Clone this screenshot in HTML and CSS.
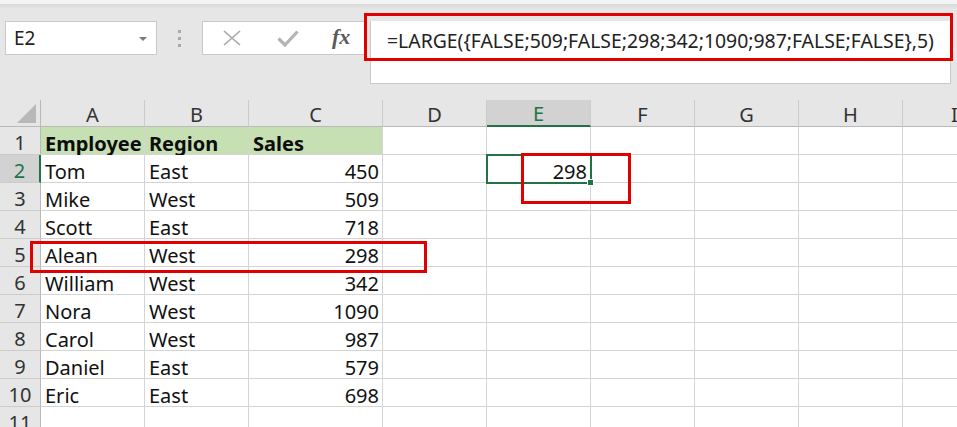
FILE: index.html
```html
<!DOCTYPE html>
<html>
<head>
<meta charset="utf-8">
<link rel="stylesheet" href="styles.css">
</head>
<body>
<div class="app">
  <div class="topstrip"></div>
  <div class="toolbar">
    <div class="namebox">
      <span class="name">E2</span>
      <svg class="caret" width="8" height="5" viewBox="0 0 8 5"><path d="M0 0H8L4 4Z" fill="#7a7a7a"/></svg>
    </div>
    <div class="grip"><i></i><i></i><i></i></div>
    <div class="buttons">
      <svg class="icon-x" width="18" height="16" viewBox="0 0 18 16"><path d="M1 1L17 15M17 1L1 15" stroke="#a6a6a6" stroke-width="1.6" fill="none"/></svg>
      <svg class="icon-check" width="22" height="17" viewBox="0 0 22 17"><path d="M1.5 8.5L8 15L20.5 1.5" stroke="#b4b4b4" stroke-width="3.2" fill="none"/></svg>
      <span class="fx">fx</span>
    </div>
    <div class="formula">=LARGE({FALSE;509;FALSE;298;342;1090;987;FALSE;FALSE},5)</div>
  </div>
  <div class="sheet">
    <div class="hd corner"><span class="tri"></span></div>
    <div class="hd col">A</div>
    <div class="hd col">B</div>
    <div class="hd col">C</div>
    <div class="hd col">D</div>
    <div class="hd col active-col">E</div>
    <div class="hd col">F</div>
    <div class="hd col">G</div>
    <div class="hd col">H</div>
    <div class="hd col">I</div>

    <div class="hd row">1</div>
    <div class="c head">Employee</div><div class="c head">Region</div><div class="c head">Sales</div>
    <div class="c"></div><div class="c"></div><div class="c"></div><div class="c"></div><div class="c"></div><div class="c"></div>

    <div class="hd row active-row">2</div>
    <div class="c">Tom</div><div class="c">East</div><div class="c num">450</div>
    <div class="c"></div><div class="c num selected">298<span class="handle"></span></div><div class="c"></div><div class="c"></div><div class="c"></div><div class="c"></div>

    <div class="hd row">3</div>
    <div class="c">Mike</div><div class="c">West</div><div class="c num">509</div>
    <div class="c"></div><div class="c"></div><div class="c"></div><div class="c"></div><div class="c"></div><div class="c"></div>

    <div class="hd row">4</div>
    <div class="c">Scott</div><div class="c">East</div><div class="c num">718</div>
    <div class="c"></div><div class="c"></div><div class="c"></div><div class="c"></div><div class="c"></div><div class="c"></div>

    <div class="hd row">5</div>
    <div class="c">Alean</div><div class="c">West</div><div class="c num">298</div>
    <div class="c"></div><div class="c"></div><div class="c"></div><div class="c"></div><div class="c"></div><div class="c"></div>

    <div class="hd row">6</div>
    <div class="c">William</div><div class="c">West</div><div class="c num">342</div>
    <div class="c"></div><div class="c"></div><div class="c"></div><div class="c"></div><div class="c"></div><div class="c"></div>

    <div class="hd row">7</div>
    <div class="c">Nora</div><div class="c">West</div><div class="c num">1090</div>
    <div class="c"></div><div class="c"></div><div class="c"></div><div class="c"></div><div class="c"></div><div class="c"></div>

    <div class="hd row">8</div>
    <div class="c">Carol</div><div class="c">West</div><div class="c num">987</div>
    <div class="c"></div><div class="c"></div><div class="c"></div><div class="c"></div><div class="c"></div><div class="c"></div>

    <div class="hd row">9</div>
    <div class="c">Daniel</div><div class="c">East</div><div class="c num">579</div>
    <div class="c"></div><div class="c"></div><div class="c"></div><div class="c"></div><div class="c"></div><div class="c"></div>

    <div class="hd row">10</div>
    <div class="c">Eric</div><div class="c">East</div><div class="c num">698</div>
    <div class="c"></div><div class="c"></div><div class="c"></div><div class="c"></div><div class="c"></div><div class="c"></div>

    <div class="hd row">11</div>
    <div class="c"></div><div class="c"></div><div class="c"></div>
    <div class="c"></div><div class="c"></div><div class="c"></div><div class="c"></div><div class="c"></div><div class="c"></div>
  </div>

  <div class="mark mark-formula"></div>
  <div class="mark mark-row"></div>
  <div class="mark mark-cell"></div>
</div>
</body>
</html>
```

FILE: styles.css
```css
* { box-sizing: border-box; }
html, body { margin: 0; padding: 0; }
body {
  width: 957px;
  height: 427px;
  overflow: hidden;
  background: #e6e6e6;
  font-family: "Noto Sans", "Liberation Sans", sans-serif;
  color: #1a1a1a;
}
.app { position: relative; width: 957px; height: 427px; overflow: hidden; }

.topstrip {
  height: 9px;
  background: linear-gradient(#f4f4f4 0, #f4f4f4 4px, #d9d9d9 4px, #e6e6e6 9px);
}

.toolbar {
  display: flex;
  align-items: flex-start;
  height: 91px;
  padding-top: 12px;
}
.namebox {
  margin-left: 5px;
  width: 152px;
  height: 34px;
  background: #fff;
  border: 1px solid #c9c9c9;
  display: flex;
  align-items: center;
  justify-content: space-between;
  padding: 0 9px 0 8px;
}
.name { font-size: 19px; color: #222; }
.caret { margin-top: 2px; }
.grip {
  width: 45px;
  height: 34px;
  display: flex;
  flex-direction: column;
  align-items: center;
  justify-content: center;
  gap: 4px;
}
.grip i { display: block; width: 3px; height: 3px; background: #a9a9a9; }
.buttons {
  width: 163px;
  height: 34px;
  background: #fff;
  border: 1px solid #c9c9c9;
  border-right: none;
  display: flex;
  align-items: center;
  padding-left: 20px;
}
.icon-x { margin-right: 36px; }
.icon-check { margin-right: 33px; }
.fx {
  font-family: "Liberation Serif", "DejaVu Serif", serif;
  font-style: italic;
  font-weight: bold;
  font-size: 22px;
  color: #5a5a5a;
  margin-top: -2px;
}
.formula {
  margin-left: 5px;
  width: 581px;
  height: 63px;
  background: #fff;
  border: 1px solid #c9c9c9;
  border-top: none;
  padding: 6px 0 0 16px;
  font-size: 19.4px;
  color: #222;
  white-space: nowrap;
}

.sheet {
  display: grid;
  grid-template-columns: 41px 104px 104px 134px 104px 104px 104px 104px 104px 104px;
  grid-template-rows: 27px repeat(11, 28px);
}
.hd {
  background: #e6e6e6;
  color: #333;
  font-size: 20px;
  display: flex;
  align-items: center;
  justify-content: center;
}
.col {
  border-right: 1px solid #cbcbcb;
  border-bottom: 1px solid #b9b9b9;
  padding-top: 2px;
}
.corner {
  position: relative;
  border-right: 1px solid #b9b9b9;
  border-bottom: 1px solid #b9b9b9;
}
.tri {
  position: absolute;
  right: 4px;
  bottom: 3px;
  width: 0; height: 0;
  border-left: 19px solid transparent;
  border-bottom: 19px solid #b8b8b8;
}
.row {
  border-right: 1px solid #b9b9b9;
  border-bottom: 1px solid #cbcbcb;
  padding-top: 4px;
}
.active-col {
  background: #d2d2d2;
  color: #217346;
  border-bottom: 2px solid #217346;
}
.active-row {
  background: #d2d2d2;
  color: #217346;
  border-right: 2px solid #217346;
}
.c {
  background: #fff;
  border-right: 1px solid #d4d4d4;
  border-bottom: 1px solid #d4d4d4;
  font-size: 20px;
  line-height: 27px;
  padding: 3px 3px 0 4px;
  white-space: nowrap;
  overflow: visible;
  color: #111;
}
.head { background: #c6e0b4; font-weight: bold; color: #0d0d0d; }
.num { text-align: right; }
.selected {
  position: relative;
  outline: 2px solid #217346;
  outline-offset: -1px;
  z-index: 2;
}
.handle {
  position: absolute;
  right: -4px;
  bottom: -4px;
  width: 7px;
  height: 7px;
  background: #217346;
  border: 1px solid #fff;
}

.mark {
  position: absolute;
  border: 3px solid #e00000;
  z-index: 5;
}
.mark-formula { left: 364px; top: 13px; width: 589px; height: 48px; }
.mark-row { left: 30px; top: 241px; width: 397px; height: 32px; }
.mark-cell { left: 521px; top: 153px; width: 110px; height: 51px; }
```
